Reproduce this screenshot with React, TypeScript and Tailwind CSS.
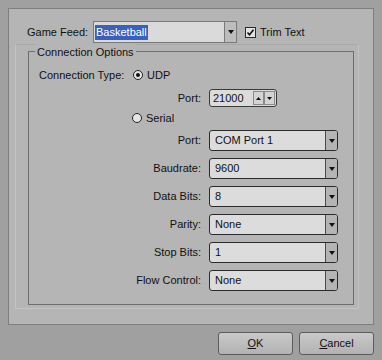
import React from 'react';

const Arrow = () => (
  <svg width="6" height="4" viewBox="0 0 6 4">
    <path d="M0 0h6L3 4z" fill="#111" />
  </svg>
);

function Combo({ value, className = '' }: { value: string; className?: string }) {
  return (
    <div className={`flex h-[21px] w-[129px] rounded-[3px] border border-[#2b2b2b] bg-[#dcdcdc] ${className}`}>
      <div className="flex flex-1 items-center pl-[5px] text-[#111]">{value}</div>
      <div className="flex w-[12px] items-center justify-center border-l border-[#4a4a4a] bg-[#b4b4b4] rounded-r-[2px]">
        <Arrow />
      </div>
    </div>
  );
}

function Radio({ checked }: { checked?: boolean }) {
  return (
    <div className="flex h-[10px] w-[10px] items-center justify-center rounded-full border border-[#222] bg-[#e6e6e6]">
      {checked && <div className="h-[4px] w-[4px] rounded-full bg-[#111]" />}
    </div>
  );
}

function Row({ label, children }: { label: string; children: React.ReactNode }) {
  return (
    <div className="mt-[7px] flex items-center">
      <div className="w-[173px] pr-[1px] text-right">{label}</div>
      <div className="ml-[7px]">{children}</div>
    </div>
  );
}

export default function App() {
  const rows = [
    { label: 'Baudrate:', value: '9600' },
    { label: 'Data Bits:', value: '8' },
    { label: 'Parity:', value: 'None' },
    { label: 'Stop Bits:', value: '1' },
    { label: 'Flow Control:', value: 'None' },
  ];

  return (
    <div className="h-[360px] w-[382px] bg-[#a0a0a0] px-[8px] pt-[8px] font-['Liberation_Sans',Arial,sans-serif] text-[11px] text-[#111]">
      {/* main panel */}
      <div className="h-[317px] w-[366px] border border-[#7e7e7e] bg-[#b5b5b5]">
        {/* Game feed row */}
        <div className="mt-[12px] flex h-[22px] items-center">
          <div className="w-[84px] shrink-0 whitespace-nowrap pl-[18px]">Game Feed:</div>
          <div className="flex h-[22px] w-[144px] border border-[#7a7a7a] bg-[#dadada]">
            <div className="flex flex-1 items-center pl-[1px]">
              <span className="bg-[#3b5fc0] px-[1px] leading-[15px] text-white">Basketball</span>
            </div>
            <div className="flex w-[12px] items-center justify-center border-l border-[#7a7a7a] bg-[#bdbdbd]">
              <Arrow />
            </div>
          </div>
          <div className="ml-[8px] flex h-[11px] w-[11px] items-center justify-center border border-[#2a2a2a] bg-[#e2e2e2]">
            <svg width="9" height="9" viewBox="0 0 9 9">
              <path d="M1.5 4.5l2 2.2L7.5 1.8" stroke="#111" strokeWidth="1.6" fill="none" />
            </svg>
          </div>
          <div className="ml-[4px]">Trim Text</div>
        </div>

        {/* outer bevel */}
        <div className="ml-[6px] mt-[1px] h-[265px] w-[344px] border border-[#c3c3c3] border-t-[#a9a9a9]">
          {/* group box */}
          <div className="relative ml-[12px] mt-[6px] h-[254px] w-[326px] border border-[#6e6e6e]">
            <div className="absolute -top-[8px] left-[6px] bg-[#b5b5b5] px-[2px]">Connection Options</div>

            <div className="mt-[15px] flex h-[16px] items-center">
              <div className="ml-[10px] w-[94px]">Connection Type:</div>
              <Radio checked />
              <div className="ml-[4px]">UDP</div>
            </div>

            <div className="mt-[6px] flex items-center">
              <div className="w-[173px] pr-[1px] text-right">Port:</div>
              <div className="ml-[7px] flex h-[18px] w-[68px] items-center rounded-[3px] border border-[#3a3a3a] bg-[#dcdcdc]">
                <div className="flex-1 pl-[3px]">21000</div>
                <div className="flex h-[14px] w-[11px] items-center justify-center border border-[#8a8a8a] bg-[#d4d4d4]">
                  <svg width="5" height="3" viewBox="0 0 5 3">
                    <path d="M0 3h5L2.5 0z" fill="#111" />
                  </svg>
                </div>
                <div className="mr-[1px] flex h-[14px] w-[11px] items-center justify-center border border-[#8a8a8a] bg-[#d4d4d4]">
                  <svg width="5" height="3" viewBox="0 0 5 3">
                    <path d="M0 0h5L2.5 3z" fill="#111" />
                  </svg>
                </div>
              </div>
            </div>

            <div className="mt-[3px] flex h-[16px] items-center">
              <div className="ml-[103px]">
                <Radio />
              </div>
              <div className="ml-[4px]">Serial</div>
            </div>

            <div className="mt-[4px] flex items-center">
              <div className="w-[173px] pr-[1px] text-right">Port:</div>
              <div className="ml-[7px]">
                <Combo value="COM Port 1" />
              </div>
            </div>

            {rows.map((r) => (
              <Row key={r.label} label={r.label}>
                <Combo value={r.value} />
              </Row>
            ))}
          </div>
        </div>
      </div>

      {/* buttons */}
      <div className="mt-[7px] flex justify-end gap-[6px]">
        <button className="h-[23px] w-[75px] rounded-[3px] border border-[#5c5c5c] bg-gradient-to-b from-[#c9c9c9] to-[#b2b2b2] text-[#111]">
          <span className="underline">O</span>K
        </button>
        <button className="h-[23px] w-[75px] rounded-[3px] border border-[#5c5c5c] bg-gradient-to-b from-[#c9c9c9] to-[#b2b2b2] text-[#111]">
          <span className="underline">C</span>ancel
        </button>
      </div>
    </div>
  );
}
